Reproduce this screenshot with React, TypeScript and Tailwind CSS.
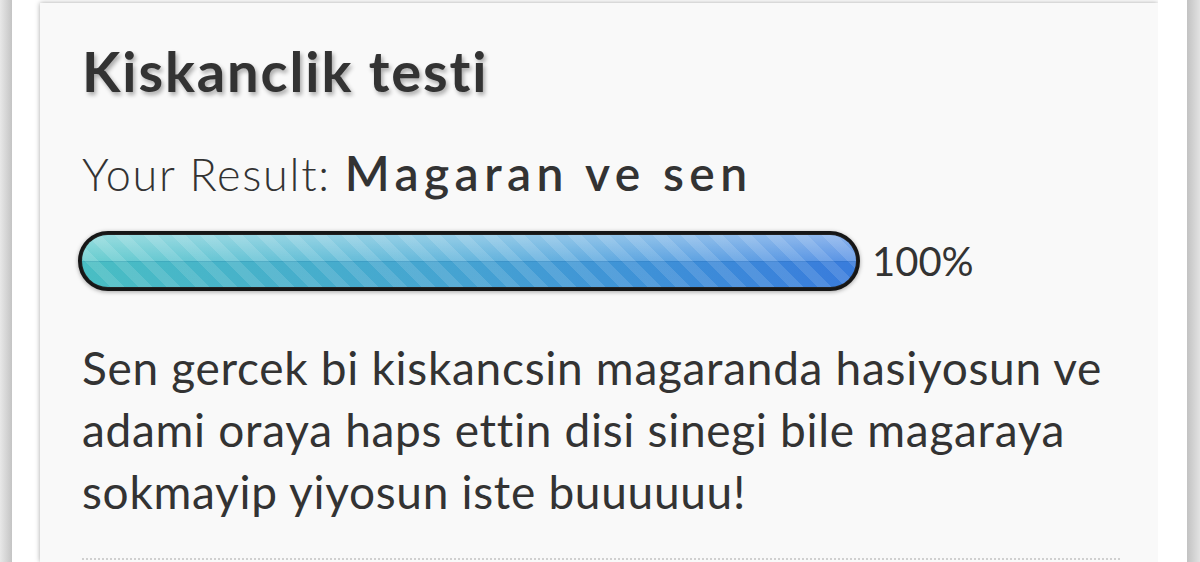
import React from "react";

function ProgressBar() {
  return (
    <div className="flex items-center gap-[12px]">
      <div className="relative h-[60px] w-[782px] shrink-0 rounded-full border-[3px] border-[#161616] bg-[#222] shadow-[0_1px_4px_rgba(0,0,0,0.35)] overflow-hidden">
        {/* fill */}
        <div className="absolute inset-[1px] rounded-full overflow-hidden bg-linear-to-r from-[#4cc4c6] via-[#48a7d6] to-[#3c7fe0]">
          {/* diagonal stripes */}
          <div className="absolute inset-0 bg-[repeating-linear-gradient(45deg,rgba(255,255,255,0.13)_0px,rgba(255,255,255,0.13)_10px,transparent_10px,transparent_20px)]" />
          {/* gloss: lighter top half, deeper bottom half */}
          <div className="absolute inset-x-0 top-0 h-1/2 bg-linear-to-b from-[rgba(255,255,255,0.42)] to-[rgba(255,255,255,0.16)]" />
          <div className="absolute inset-x-0 bottom-0 h-1/2 bg-[rgba(0,50,120,0.04)]" />
          <div className="absolute inset-x-0 top-1/2 h-px bg-[rgba(0,60,120,0.1)]" />
        </div>
      </div>
      <span className="text-[40px] leading-none text-[#333]">100%</span>
    </div>
  );
}

export default function App() {
  return (
    <div className="flex h-[562px] w-[1200px] overflow-hidden bg-white font-['Lato','Noto_Sans',sans-serif]">
      <div className="w-[12px] shrink-0 bg-linear-to-r from-[#e8e8e8] to-[#c4c4c4]" />
      <div className="w-[28px] shrink-0 bg-white" />
      <div className="mt-[3px] w-[1118px] shrink-0 bg-[#f9f9f9] shadow-[0_0_5px_rgba(0,0,0,0.35)] pl-[42px] pr-[28px] pt-[36px]">
        <h1 className="text-[56px] font-bold leading-[64px] tracking-[1.9px] text-[#333] [text-shadow:2px_3px_4px_rgba(0,0,0,0.32)]">
          Kiskanclik testi
        </h1>
        <div className="mt-[42px] flex items-baseline text-[#333]">
          <span className="text-[45px] font-light leading-[56px] tracking-[1.7px]">Your Result:</span>
          <span className="ml-[14px] text-[48px] font-semibold leading-[56px] tracking-[5.4px]">Magaran ve sen</span>
        </div>
        <div className="mt-[29px] -ml-[4px]">
          <ProgressBar />
        </div>
        <p className="mt-[46px] text-[46px] leading-[62px] tracking-[0.7px] text-[#333]">
          Sen gercek bi kiskancsin magaranda hasiyosun ve adami oraya haps ettin disi sinegi bile magaraya sokmayip yiyosun iste buuuuuu!
        </p>
        <div className="mt-[35px] mr-[10px] border-t-2 border-dotted border-[#d0d0d0]" />
      </div>
      <div className="w-[29px] shrink-0 bg-white" />
      <div className="w-[13px] shrink-0 bg-linear-to-r from-[#c2c2c2] to-[#e2e2e2]" />
    </div>
  );
}
